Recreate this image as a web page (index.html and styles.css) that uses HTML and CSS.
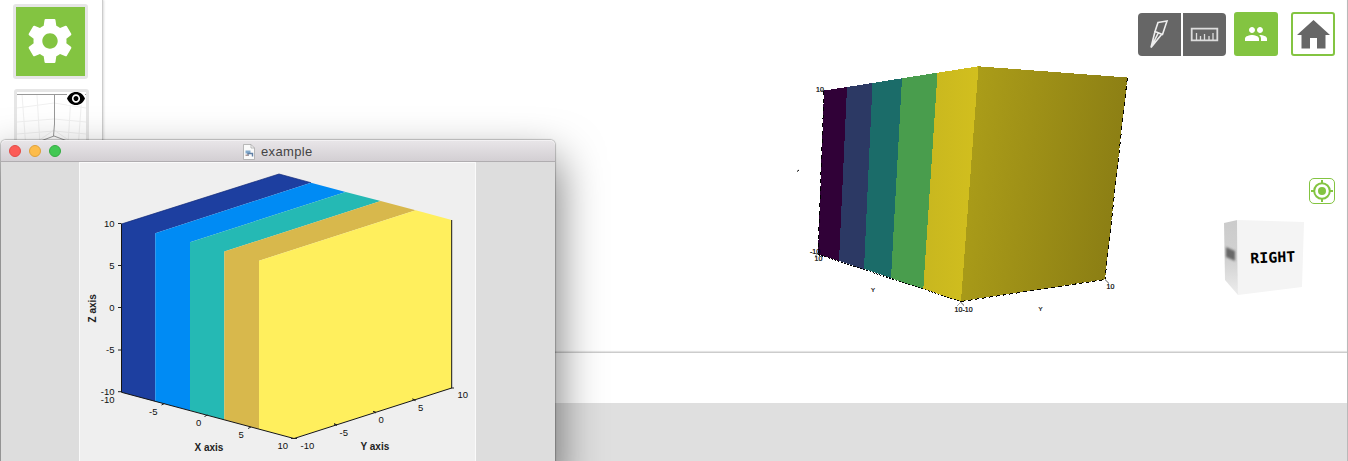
FILE: index.html
```
<!DOCTYPE html>
<html lang="en">
<head>
<meta charset="utf-8">
<title>example</title>
<link rel="stylesheet" href="styles.css">
</head>
<body>
<div class="app">
  <aside class="sidebar">
    <button class="tile tile-settings" aria-label="Settings">
      <svg viewBox="2 2 20 20" width="44" height="44"><path fill="#fff" d="M19.43 12.98c.04-.32.07-.64.07-.98s-.03-.66-.07-.98l2.11-1.65c.19-.15.24-.42.12-.64l-2-3.46c-.12-.22-.39-.3-.61-.22l-2.49 1c-.52-.4-1.08-.73-1.69-.98l-.38-2.65C14.46 2.18 14.25 2 14 2h-4c-.25 0-.46.18-.49.42l-.38 2.65c-.61.25-1.17.59-1.69.98l-2.49-1c-.23-.09-.49 0-.61.22l-2 3.46c-.13.22-.07.49.12.64l2.11 1.65c-.04.32-.07.65-.07.98s.03.66.07.98l-2.11 1.65c-.19.15-.24.42-.12.64l2 3.46c.12.22.39.3.61.22l2.49-1c.52.4 1.08.73 1.69.98l.38 2.65c.03.24.24.42.49.42h4c.25 0 .46-.18.49-.42l.38-2.65c.61-.25 1.17-.59 1.69-.98l2.49 1c.23.09.49 0 .61-.22l2-3.46c.12-.22.07-.49-.12-.64l-2.11-1.65zM12 15.5c-1.93 0-3.5-1.57-3.5-3.5s1.57-3.5 3.5-3.5 3.5 1.57 3.5 3.5-1.57 3.5-3.5 3.5z"/></svg>
    </button>
    <div class="tile tile-preview">
      <svg viewBox="0 0 69 69" width="69" height="69" fill="none">
        <path stroke="#f0f0f0" d="M5 2l4 55M20 3l3 50M54 3l-3 50M65 2l-4 55M0 16l37-5 32 5M0 30l37-3 32 3M0 42l37-3 32 3M11 56l26-18 26 18"/>
        <path stroke="#999" d="M0 2.500h69M37.500 2v30l-1 12M37 44l-24 9M37 44l24 9"/>
      </svg>
      <svg class="eye" viewBox="1 4.500 22 15" width="18" height="13" preserveAspectRatio="none"><path d="M12 4.500C7 4.500 2.730 7.610 1 12c1.730 4.390 6 7.500 11 7.500s9.270-3.110 11-7.500c-1.730-4.390-6-7.500-11-7.500zM12 17c-2.760 0-5-2.240-5-5s2.240-5 5-5 5 2.240 5 5-2.240 5-5 5zm0-8c-1.660 0-3 1.340-3 3s1.340 3 3 3 3-1.340 3-3-1.340-3-3-3z"/></svg>
    </div>
  </aside>
  <main class="workspace">
    <section class="viewport">
      <svg class="scene" viewBox="790 55 350 265" width="350" height="265">
        <defs>
          <linearGradient id="side" x1="0" y1="0" x2="1" y2=".2"><stop stop-color="#aea019"/><stop offset=".45" stop-color="#9f9117"/><stop offset="1" stop-color="#8c7f14"/></linearGradient>
          <linearGradient id="gold"><stop stop-color="#c8b71f"/><stop offset="1" stop-color="#d2bf1e"/></linearGradient>
        </defs>
        <g shape-rendering="crispEdges">
          <path fill="#300137" d="M824 90.500l23-3.500-8 174-21-7z"/>
          <path fill="#2c3964" d="M847 87l25.500-4-8.500 186-25-8z"/>
          <path fill="#1b6c69" d="M872.500 83l29.500-4.700-11 199.700-27-9z"/>
          <path fill="#499d4d" d="M902 78.300l35.500-5.600-14.200 216.300-32.300-11z"/>
          <path fill="url(#gold)" d="M937.500 72.700l41-6.400-17.500 235-37.700-12.300z"/>
          <path fill="url(#side)" d="M978.500 66.300l148.800 11.200-22.300 201.800-144 22z"/>
          <path stroke="#000" fill="none" stroke-dasharray="4 4" d="M824 91l-6 163M1127.300 78l-22.300 201"/>
          <path stroke="#000" fill="none" stroke-dasharray="2 1.400" d="M818 254.500l143 47"/>
          <path stroke="#000" fill="none" stroke-dasharray="4 3" d="M961 301.500l144-22"/>
          <path stroke="#aaa" fill="none" d="M820 90.500h4M814 253.500h4l-3 3M961 302l-4 4M961 302l3 4M1105 279.500l4 4"/>
        </g>
        <g class="scene-labels">
          <text x="816" y="91.500">10</text><text x="810" y="254">-10</text><text x="814.500" y="261">10</text>
          <text x="954.500" y="311.500">10</text><text x="962.500" y="312">-10</text><text x="1106.500" y="288.500">10</text>
          <text class="axis-mark" x="871" y="292">Y</text><text class="axis-mark" x="1038.500" y="310.500">Y</text>
        </g>
        <path stroke="#000" d="M797 171.500l2-1.500"/>
      </svg>
      <nav class="toolbar">
        <div class="tool-group">
          <button class="tool" aria-label="Section"><svg viewBox="0 0 43 43" width="43" height="43" fill="none" stroke="#eee" stroke-width="1.600"><path d="M20 9.500l9-1.500-4.500 13.500-7.500-3zM17 18.500l-4 16L23.500 21.500M20 20.500l-7 14"/></svg></button>
          <button class="tool" aria-label="Measure"><svg viewBox="0 0 43 43" width="43" height="43" fill="none" stroke="#ddd"><path stroke-width="1.800" d="M8.700 15.700h25.600v11.600H8.700z"/><path stroke-width="1.300" d="M13.500 27v-7M17.500 27v-4M21.500 27v-6M26 27v-4M30 27v-7"/></svg></button>
        </div>
        <button class="tool tool-people" aria-label="Collaborators"><svg viewBox="0 0 24 24" width="24" height="24" fill="#fff"><path d="M16 11c1.660 0 2.990-1.340 2.990-3S17.660 5 16 5s-3 1.340-3 3 1.340 3 3 3zm-8 0c1.660 0 2.990-1.340 2.990-3S9.660 5 8 5 5 6.340 5 8s1.340 3 3 3zm0 2c-2.330 0-7 1.170-7 3.500V19h14v-2.500c0-2.330-4.670-3.500-7-3.500zm8 0c-.29 0-.62.020-.97.050 1.160.84 1.970 1.970 1.970 3.450V19h6v-2.500c0-2.330-4.670-3.500-7-3.500z"/></svg></button>
        <button class="tool tool-home" aria-label="Home"><svg viewBox="0 0 33 29" width="33" height="29" fill="#666"><path d="M16.500 0L33 15h-4.500v13.500H20V18h-7v10.500H4.500V15H0z"/></svg></button>
      </nav>
      <button class="locate" aria-label="Center view"><svg viewBox="0 0 24 24" width="24" height="24" fill="none" stroke="#83c441"><circle cx="12" cy="12" r="7.800" stroke-width="2"/><path stroke-width="2" d="M12 1v4M12 19v4M1 12h4M19 12h4"/><circle cx="12" cy="12" r="4" fill="#83c441" stroke="none"/></svg></button>
      <svg class="view-cube" viewBox="1220 215 90 85" width="90" height="85">
        <defs>
          <linearGradient id="cubeSide" x2="0" y2="1"><stop stop-color="#cbcbcb"/><stop offset=".55" stop-color="#d2d2d2"/><stop offset="1" stop-color="#ededed"/></linearGradient>
          <filter id="soft" x="-40%" y="-40%" width="180%" height="180%"><feGaussianBlur stdDeviation="1.300"/></filter>
        </defs>
        <path fill="url(#cubeSide)" d="M1224 223l13.500-3 .5 75-13-15z"/>
        <path fill="#f4f4f4" d="M1237 220l67 2-2 65-64 8z"/>
        <path fill="#333" opacity=".65" filter="url(#soft)" d="M1226 247l9 4v10l-9-4z"/>
        <text class="cube-label" transform="translate(1250.500 263.500) rotate(-2.500)" textLength="45" lengthAdjust="spacingAndGlyphs">RIGHT</text>
      </svg>
    </section>
    <section class="tray"></section>
    <footer class="status"></footer>
  </main>
</div>

<div class="window">
  <header class="titlebar">
    <div class="lights"><i class="light close"></i><i class="light minimize"></i><i class="light expand"></i></div>
    <div class="title">
      <svg viewBox="0 0 12 16" width="12" height="16"><path fill="#fafafa" stroke="#aaa" stroke-width=".8" d="M.5.500H8L11.500 4v11.500H.5z"/><path fill="none" stroke="#aaa" stroke-width=".8" d="M8 .5V4h3.500"/><path fill="#82a9cb" d="M2.500 6.500h5v3h-5z"/><path fill="none" stroke="#5f7fa5" stroke-width="1.400" d="M5 12V9.500h4.500v3"/><path fill="#a99" d="M2.500 10.500h3v1.500h-3z"/></svg>
      <span>example</span>
    </div>
  </header>
  <div class="window-body">
    <div class="figure">
      <svg viewBox="80 162 396 299" width="396" height="299">
        <path fill="#1d3fa0" d="M279 174L121.300 224v168.300l34 9.100V233.300L311 182.700z"/>
        <path fill="#008bf4" d="M311 182.700L155.300 233.300v168.100l34.700 9.200V242.300L345.700 192z"/>
        <path fill="#25b9b4" d="M345.700 192L190 242.300v168.300l34.300 9.100V251.500L380.700 201z"/>
        <path fill="#d8b84c" d="M380.700 201L224.300 251.500v168.200l34.700 9.300V260.700l156.700-50.400z"/>
        <path fill="#ffef5d" d="M415.700 210.300L259 260.700V429l35 9.300L451.700 388V220z"/>
        <path fill="none" stroke="#151515" d="M121.500 224v168.300L294 438.500 451.700 388V220"/>
        <path fill="none" stroke="#102878" stroke-width=".7" d="M121.500 224L279 174l32 8.700"/>
        <path fill="none" stroke="#222" d="M118 223.500h3.500M118 265.500h3.500M118 307.500h3.500M118 350h3.500M118 391.700h3.500M164.500 403.500l-3 1.500M207.500 415l-3 1.500M251 427l-3 1.500M294 438.500h-3M294 438.500h3M337 424.800l-3-1 3 1.700M376 412.300l-3-1 3 1.700M415.500 400l-3-1 3 1.700M451 388h3"/>
        <g class="ticks">
          <g text-anchor="end"><text x="114.500" y="226.800">10</text><text x="114.500" y="268.800">5</text><text x="114.500" y="310.800">0</text><text x="114.500" y="352.800">-5</text><text x="114.500" y="394.500">-10</text><text x="114.500" y="403.300">-10</text></g>
          <text x="149" y="414.500">-5</text><text x="196" y="426.300">0</text><text x="238.500" y="437.700">5</text><text x="277.500" y="449.300">10</text>
          <text x="300.500" y="448.700">-10</text><text x="339.500" y="436">-5</text><text x="378.500" y="423.300">0</text><text x="418" y="411">5</text><text x="457.500" y="398">10</text>
        </g>
        <g class="axis-names"><text x="194.500" y="451">X axis</text><text x="360.500" y="450">Y axis</text><text transform="translate(95.500 322.500) rotate(-90)">Z axis</text></g>
      </svg>
    </div>
  </div>
</div>
</body>
</html>
```
FILE: styles.css
```
* { box-sizing: border-box; }
body { margin: 0; width: 1348px; height: 461px; overflow: hidden; position: relative; background: #fff; font-family: "Liberation Sans", Arial, sans-serif; }
button { display: flex; align-items: center; justify-content: center; padding: 0; border: 0; }
svg { display: block; flex: none; }
.app { display: flex; height: 461px; border-right: 1px solid #b9b9b9; }
.sidebar { width: 103px; padding: 4px 0 0 13px; border-right: 1px solid #ccc; box-shadow: 1px 0 2px #ddd; display: flex; flex-direction: column; gap: 10px; }
.tile { width: 75px; height: 75px; flex: none; border: 3px solid #e6e6e6; border-radius: 3px; }
.tile-settings { background: #83c441; padding: 0 1px 1px 0; }
.tile-preview { margin-left: 1px; position: relative; background: #fff; }
.eye { position: absolute; top: 0; left: 50px; background: #fff; }
.workspace { flex: 1; display: flex; flex-direction: column; }
.viewport { position: relative; height: 353px; border-bottom: 1px solid #ccc; box-shadow: inset 0 -1px 1px #e2e2e2; }
.tray { height: 50px; }
.status { flex: 1; background: #dfdfdf; }
.scene { position: absolute; left: 687px; top: 55px; }
.scene-labels { font: 7px "Liberation Sans", Arial, sans-serif; fill: #000; stroke: #000; stroke-width: .2px; }
.axis-mark { font-size: 6px; }
.toolbar { display: flex; justify-content: flex-end; padding: 12px 12px 0 0; }
.tool-group { display: flex; gap: 2px; width: 88px; height: 43px; margin: 1px 8px 0 0; border-radius: 4px; overflow: hidden; background: #fff; }
.tool { height: 43px; width: 43px; background: #666; }
.tool-people { width: 44px; height: 44px; border-radius: 3px; background: #83c441; margin-right: 13px; }
.toolbar > .tool-home { flex: none; width: 44px; height: 44px; border: 2px solid #83c441; border-radius: 3px; background: #fff; }
.locate { position: absolute; left: 1206px; top: 178px; width: 26px; height: 26px; border: 1px solid #83c441; border-radius: 5px; background: #fff; }
.view-cube { position: absolute; left: 1117px; top: 215px; }
.cube-label { font: bold 14.500px "DejaVu Sans Mono", monospace; fill: #000; }
.window { position: absolute; left: 1px; top: 140px; width: 554px; height: 330px; border-radius: 5px 5px 0 0; background: #ddd; box-shadow: 0 0 1px 1px rgba(0,0,0,.22), 0 22px 44px 4px rgba(0,0,0,.5); }
.titlebar { height: 22px; display: flex; align-items: center; position: relative; border-radius: 5px 5px 0 0; border-bottom: 1px solid #b0adb0; background: linear-gradient(#e9e6e9, #d3cfd3); box-shadow: inset 0 1px #f3f1f3; }
.lights { display: flex; gap: 8px; padding-left: 8px; }
.light { width: 12px; height: 12px; border-radius: 50%; border: 1px solid; }
.close { background: #fc5b57; border-color: #e24b47; }
.minimize { background: #fdbc4b; border-color: #dfa13a; }
.expand { background: #43c854; border-color: #35ac43; }
.title { position: absolute; left: 242px; top: 3px; display: flex; gap: 6px; align-items: center; font-size: 13px; line-height: 16px; letter-spacing: .35px; color: #444; }
.title span { padding-top: 1px; }
.window-body { display: flex; padding-left: 78px; }
.figure { width: 397px; height: 299px; background: #efefef; border: solid #fafafa; border-width: 1px 1px 0; }
.figure svg { margin-top: -1px; }
.ticks { font: 9.500px "Liberation Sans", Arial, sans-serif; fill: #111; }
.axis-names { font: bold 10px "Liberation Sans", Arial, sans-serif; fill: #222; }
```
